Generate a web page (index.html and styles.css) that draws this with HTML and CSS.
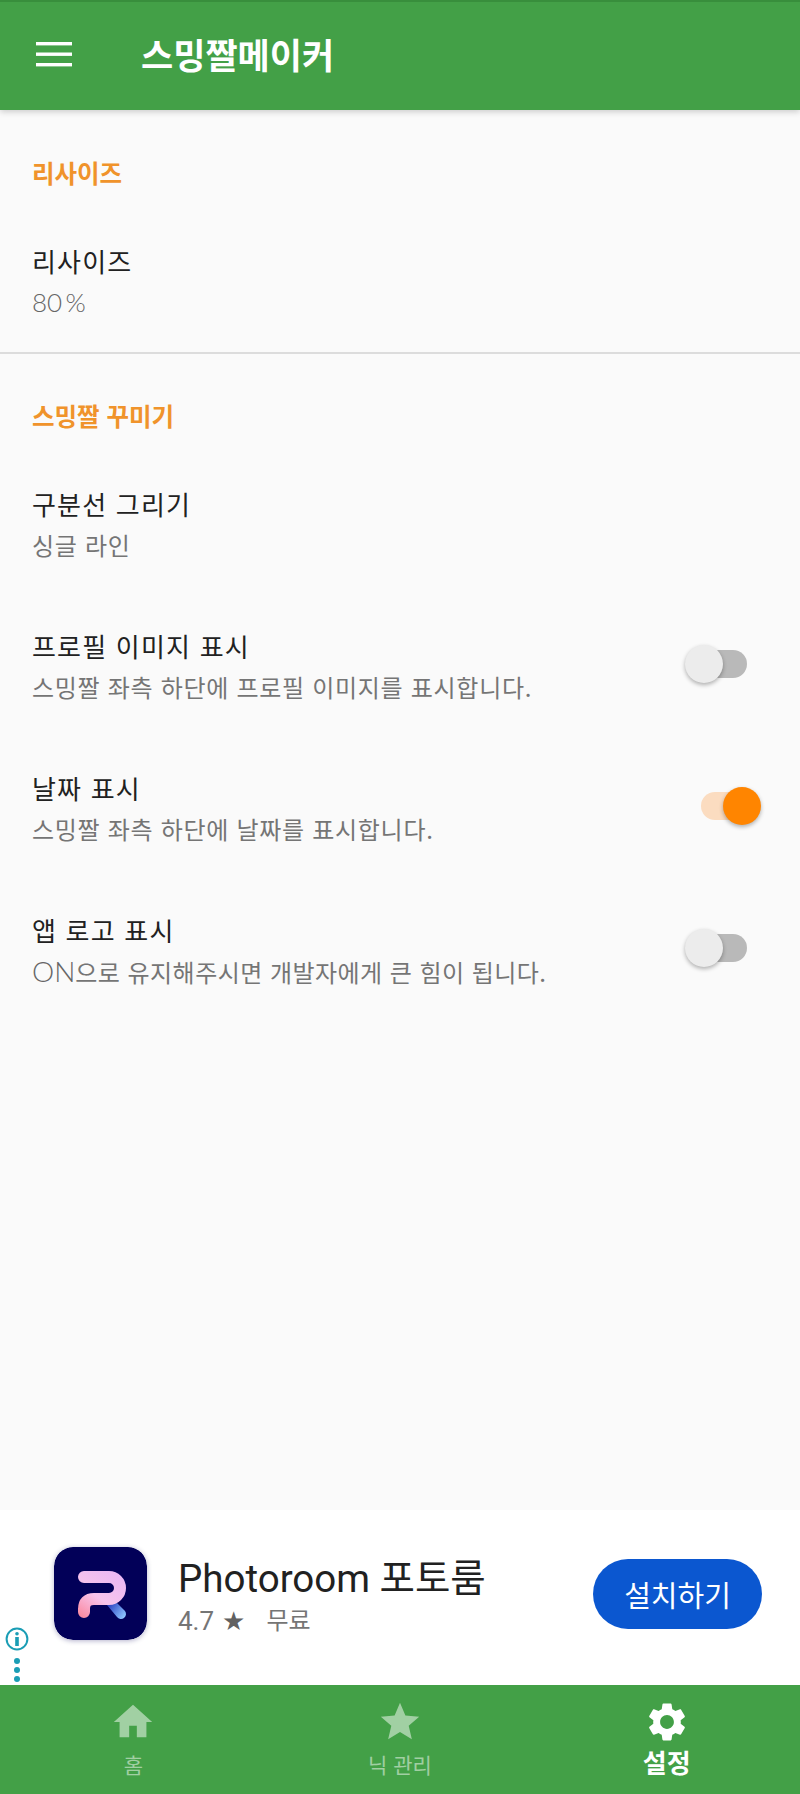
FILE: index.html
```html
<!DOCTYPE html>
<html lang="ko">
<head>
    <meta charset="UTF-8">
    <meta name="viewport" content="width=device-width, initial-scale=1.0">
    <title>스밍짤메이커</title>
    <link rel="stylesheet" href="styles.css">
</head>
<body>
    <div class="app">
        <div class="header">
            <svg class="menu-icon" viewBox="0 0 36 26">
                <rect x="0" y="1" width="36" height="3.4" fill="#fff"></rect>
                <rect x="0" y="11.5" width="36" height="3.4" fill="#fff"></rect>
                <rect x="0" y="22" width="36" height="3.4" fill="#fff"></rect>
            </svg>
            <h1>스밍짤메이커</h1>
        </div>

        <div class="settings">
            <div class="section section-first">
                <div class="section-title">리사이즈</div>
                <div class="item">
                    <div class="item-text">
                        <div class="item-title">리사이즈</div>
                        <div class="item-sub percent">80&#8201;%</div>
                    </div>
                </div>
            </div>
            <div class="section">
                <div class="section-title">스밍짤 꾸미기</div>
                <div class="item">
                    <div class="item-text">
                        <div class="item-title">구분선 그리기</div>
                        <div class="item-sub">싱글 라인</div>
                    </div>
                </div>
                <div class="item">
                    <div class="item-text">
                        <div class="item-title">프로필 이미지 표시</div>
                        <div class="item-sub">스밍짤 좌측 하단에 프로필 이미지를 표시합니다.</div>
                    </div>
                    <div class="switch"><span class="thumb"></span></div>
                </div>
                <div class="item">
                    <div class="item-text">
                        <div class="item-title">날짜 표시</div>
                        <div class="item-sub">스밍짤 좌측 하단에 날짜를 표시합니다.</div>
                    </div>
                    <div class="switch on"><span class="thumb"></span></div>
                </div>
                <div class="item">
                    <div class="item-text">
                        <div class="item-title">앱 로고 표시</div>
                        <div class="item-sub tight"><span class="latin">ON</span>으로 유지해주시면 개발자에게 큰 힘이 됩니다.</div>
                    </div>
                    <div class="switch"><span class="thumb"></span></div>
                </div>
            </div>
        </div>

        <div class="ad">
            <div class="ad-marks">
                <svg class="ad-info" viewBox="0 0 24 24">
                    <circle cx="12" cy="12" r="10.4" fill="none" stroke="#1a9db5" stroke-width="2"></circle>
                    <circle cx="12" cy="6.8" r="1.8" fill="#1a9db5"></circle>
                    <rect x="10.2" y="10" width="3.6" height="9" fill="#1a9db5"></rect>
                </svg>
                <span class="ad-dot"></span>
                <span class="ad-dot"></span>
                <span class="ad-dot"></span>
            </div>
            <svg class="ad-icon" viewBox="0 0 93 93">
                <defs>
                    <linearGradient id="logoPink" gradientUnits="userSpaceOnUse" x1="60" y1="24" x2="28" y2="70">
                        <stop offset="0" stop-color="#eab8f4"></stop>
                        <stop offset="0.55" stop-color="#f7c4ec"></stop>
                        <stop offset="1" stop-color="#fb8ba2"></stop>
                    </linearGradient>
                    <linearGradient id="logoBlue" gradientUnits="userSpaceOnUse" x1="54" y1="58" x2="70" y2="70">
                        <stop offset="0" stop-color="#2a3fc0"></stop>
                        <stop offset="1" stop-color="#8cc4ff"></stop>
                    </linearGradient>
                </defs>
                <rect width="93" height="93" rx="19" fill="#020058"></rect>
                <path d="M53 58 L63 56 L71 64 A5 5 0 0 1 63 70 Z" fill="url(#logoBlue)"></path>
                <path d="M30 30 H55 A11 11 0 0 1 55 52 H40 Q30 52 30 62 V65" stroke="url(#logoPink)" stroke-width="12" stroke-linecap="round" stroke-linejoin="round" fill="none"></path>
            </svg>
            <div class="ad-text">
                <div class="ad-name">Photoroom 포토룸</div>
                <div class="ad-meta">
                    <span>4.7</span>
                    <span class="ad-star">★</span>
                    <span class="ad-free">무료</span>
                </div>
            </div>
            <button class="ad-button">설치하기</button>
        </div>

        <div class="nav">
            <div class="nav-item">
                <svg viewBox="0 0 24 24"><path d="M10 20v-6h4v6h5v-8h3L12 3 2 12h3v8z"></path></svg>
                <span>홈</span>
            </div>
            <div class="nav-item">
                <svg viewBox="0 0 24 24"><path d="M12 17.27L18.18 21l-1.64-7.03L22 9.24l-7.19-.61L12 2 9.19 8.63 2 9.24l5.46 4.73L5.82 21z"></path></svg>
                <span>닉 관리</span>
            </div>
            <div class="nav-item active">
                <svg viewBox="0 0 24 24"><path d="M19.14 12.94c.04-.3.06-.61.06-.94 0-.32-.02-.64-.07-.94l2.03-1.58c.18-.14.23-.41.12-.61l-1.92-3.32c-.12-.22-.37-.29-.59-.22l-2.39.96c-.5-.38-1.03-.7-1.62-.94l-.36-2.54c-.04-.24-.24-.41-.48-.41h-3.84c-.24 0-.43.17-.47.41l-.36 2.54c-.59.24-1.13.57-1.62.94l-2.39-.96c-.22-.08-.47 0-.59.22L2.74 8.87c-.12.21-.08.47.12.61l2.03 1.58c-.05.3-.09.63-.09.94s.02.64.07.94l-2.03 1.58c-.18.14-.23.41-.12.61l1.92 3.32c.12.22.37.29.59.22l2.39-.96c.5.38 1.03.7 1.62.94l.36 2.54c.05.24.24.41.48.41h3.84c.24 0 .44-.17.47-.41l.36-2.54c.59-.24 1.13-.56 1.62-.94l2.39.96c.22.08.47 0 .59-.22l1.92-3.32c.12-.22.07-.47-.12-.61l-2.01-1.58zM12 15.6c-1.98 0-3.6-1.62-3.6-3.6s1.62-3.6 3.6-3.6 3.6 1.62 3.6 3.6-1.62 3.6-3.6 3.6z"></path></svg>
                <span>설정</span>
            </div>
        </div>
    </div>
</body>
</html>
```

FILE: styles.css
```css
body {
    font-family: "Noto Sans CJK KR", Roboto, sans-serif;
    background-color: #fafafa;
    margin: 0;
    padding: 0;
}

.app {
    height: 1794px;
    display: flex;
    flex-direction: column;
}

.header {
    height: 108px;
    background-color: #43a047;
    border-top: 2px solid #388e3c;
    display: flex;
    align-items: center;
    padding-left: 36px;
    box-shadow: 0 2px 6px rgba(0, 0, 0, 0.18);
    flex-shrink: 0;
}

.menu-icon {
    width: 36px;
    height: 26px;
    margin-top: -4px;
}

.header h1 {
    margin: -4px 0 0 69px;
    font-size: 35px;
    font-weight: 700;
    line-height: 44px;
    color: #fff;
}

.settings {
    flex: 1;
}

.section {
    padding: 44px 0 0 32px;
}

.section-first {
    height: 197px;
    padding-top: 45px;
    border-bottom: 2px solid #dcdcdc;
}

.section-title {
    font-size: 24.5px;
    font-weight: 700;
    line-height: 36px;
    color: #f0932b;
}

.item {
    display: flex;
    align-items: center;
    justify-content: space-between;
    height: 142px;
    padding-right: 53px;
    margin-top: 19px;
    margin-bottom: -19px;
}

.section-first .item {
    height: 110px;
    margin-top: 35px;
    margin-bottom: 0;
}

.item-text {
    display: flex;
    flex-direction: column;
    gap: 6px;
}

.item-title {
    font-size: 26px;
    line-height: 36px;
    color: #212121;
    letter-spacing: 1.2px;
}

.item-sub {
    font-size: 24px;
    line-height: 34px;
    color: #757575;
    letter-spacing: 0.7px;
}

.item-sub.tight {
    letter-spacing: 0.45px;
}

.latin,
.percent {
    font-family: Lato, sans-serif;
    font-size: 28px;
    font-weight: 300;
    letter-spacing: 0;
    color: #666;
}

.percent {
    font-size: 26px;
}

.switch {
    position: relative;
    width: 54px;
    height: 28px;
    border-radius: 14px;
    background-color: #b9b9b9;
    margin-top: -4px;
}

.switch .thumb {
    position: absolute;
    top: -5px;
    left: -8px;
    width: 38px;
    height: 38px;
    border-radius: 50%;
    background-color: #ececec;
    box-shadow: 0 2px 4px rgba(0, 0, 0, 0.3);
}

.switch.on {
    background-color: #fbdcc0;
    margin-right: -8px;
}

.switch.on .thumb {
    left: 22px;
    background-color: #ff8500;
}

.ad {
    position: relative;
    height: 175px;
    background-color: #fff;
    display: flex;
    align-items: center;
    padding-left: 54px;
    padding-right: 38px;
    flex-shrink: 0;
}

.ad-marks {
    position: absolute;
    left: 5px;
    top: 117px;
    width: 24px;
    display: flex;
    flex-direction: column;
    align-items: center;
    gap: 3px;
}

.ad-info {
    width: 24px;
    height: 24px;
    margin-bottom: 4px;
}

.ad-dot {
    width: 6px;
    height: 6px;
    border-radius: 50%;
    background-color: #1a9db5;
}

.ad-icon {
    width: 93px;
    height: 93px;
    flex-shrink: 0;
    border-radius: 19px;
    box-shadow: 0 1px 5px rgba(10, 0, 90, 0.3);
    margin-top: -9px;
}

.ad-text {
    flex: 1;
    margin-left: 31px;
    margin-top: -3px;
}

.ad-name {
    font-family: Roboto, "Noto Sans CJK KR", sans-serif;
    font-size: 38.5px;
    line-height: 46px;
    color: #212121;
}

.ad-meta {
    display: flex;
    align-items: center;
    font-family: Roboto, "Noto Sans CJK KR", sans-serif;
    font-size: 26px;
    line-height: 32px;
    color: #757575;
    margin-top: 3px;
}

.ad-star {
    margin-left: 8px;
    font-family: "DejaVu Sans", sans-serif;
    color: #616161;
}

.ad-free {
    margin-left: 21px;
    font-size: 24px;
}

.ad-button {
    width: 169px;
    height: 70px;
    border: none;
    border-radius: 35px;
    background-color: #0b57d0;
    color: #fff;
    font-family: "Noto Sans CJK KR", sans-serif;
    font-size: 29px;
    margin-top: -7px;
}

.nav {
    height: 109px;
    background-color: #43a047;
    display: flex;
    flex-shrink: 0;
}

.nav-item {
    flex: 1;
    display: flex;
    flex-direction: column;
    align-items: center;
    color: rgba(255, 255, 255, 0.5);
    font-size: 21px;
    line-height: 30px;
    padding-top: 14px;
}

.nav-item svg {
    width: 46px;
    height: 46px;
    fill: rgba(255, 255, 255, 0.5);
    margin-bottom: 4px;
}

.nav-item.active {
    color: #fff;
    font-weight: 700;
    font-size: 26px;
}

.nav-item.active svg {
    fill: #fff;
    margin-bottom: 2px;
}
```
